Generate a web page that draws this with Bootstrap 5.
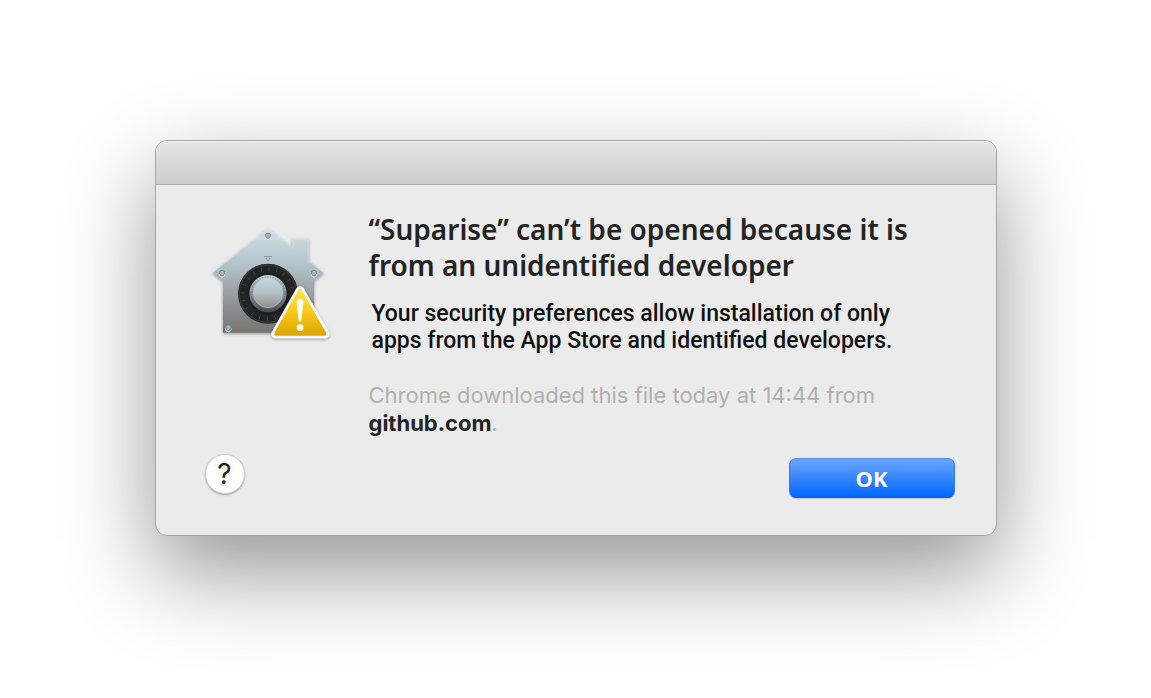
<!DOCTYPE html>
<html lang="en">
<head>
<meta charset="utf-8">
<meta name="viewport" content="width=device-width, initial-scale=1">
<title>Unidentified developer</title>
<link href="https://cdn.jsdelivr.net/npm/bootstrap@5.3.0/dist/css/bootstrap.min.css" rel="stylesheet">
<style>
  body { background: #fff; font-family: Inter, "Liberation Sans", sans-serif; color: #232323; }
  .alert-window {
    max-width: 842px;
    background: #ebebeb;
    border: 1px solid #a6a6a6;
    border-radius: 12px;
    box-shadow: 0 36px 90px rgba(0, 0, 0, .42);
  }
  .stage { padding-top: 140px; padding-bottom: 120px; }
  .title-strip {
    height: 44px;
    background: linear-gradient(#e6e6e6, #cdcdcd);
    border-bottom: 1px solid #a9a9a9;
    border-radius: 11px 11px 0 0;
    box-shadow: inset 0 1px 0 #f3f3f3;
  }
  .alert-content { padding: 26px 41px 37px 49px; }
  .icon-col { width: 164px; }
  .house { width: 140px; height: 135px; margin: 4px 0 0 -5px; }
  .headline { font-family: "Noto Sans", "Open Sans", sans-serif; font-weight: 600; font-size: 28px; line-height: 36px; }
  .reason { font-family: Roboto, sans-serif; font-size: 23px; line-height: 27px; font-weight: 500; color: #111; padding: 1px 0 3px 3px; }
  .origin { font-size: 22px; line-height: 28px; color: #b0b0b0; }
  .origin a { color: #232323; font-weight: 700; text-decoration: none; }
  .alert-actions { margin-top: 17px; }
  .help-btn {
    width: 40px; height: 40px; background: #fff; border: 1px solid #cfcfcf;
    font-size: 28px; line-height: 38px; font-weight: 400; color: #232323;
    box-shadow: 0 1px 2px rgba(0, 0, 0, .3);
  }
  .ok-btn {
    width: 166px; height: 40px; border: 1px solid; border-color: #4a90fa #2b7cf7 #0a62f0; border-radius: 7px;
    background: linear-gradient(#6ca6ff, #0066ff); color: #fff;
    font-family: "Noto Sans", sans-serif; font-weight: 700; font-size: 22px; line-height: 38px;
    box-shadow: 0 1px 1px rgba(0, 0, 0, .15);
  }
</style>
</head>
<body>
<main class="stage container-fluid min-vh-100 d-flex justify-content-center align-items-start">
  <section class="alert-window w-100" role="alertdialog" aria-labelledby="headline" aria-describedby="reason">
    <div class="title-strip"></div>
    <div class="alert-content">
      <div class="d-flex">
        <div class="icon-col flex-shrink-0">
          <svg class="house d-block" viewBox="0 0 420 405" role="img" aria-label="Security warning">
            <defs>
              <linearGradient id="wall" x1="0" y1="0" x2="0" y2="1"><stop offset="0" stop-color="#cfe0e7"/><stop offset=".35" stop-color="#b3c3ca"/><stop offset=".7" stop-color="#929698"/><stop offset="1" stop-color="#757372"/></linearGradient>
              <linearGradient id="ring" x1="0" y1="0" x2="0" y2="1"><stop offset="0" stop-color="#c4d1d6"/><stop offset=".45" stop-color="#8d979c"/><stop offset="1" stop-color="#4b4b4b"/></linearGradient>
              <linearGradient id="knob" x1="0" y1="0" x2="0" y2="1"><stop offset="0" stop-color="#c2dae3"/><stop offset=".5" stop-color="#b3bec3"/><stop offset="1" stop-color="#8d8d8d"/></linearGradient>
              <linearGradient id="gold" x1="0" y1="0" x2="0" y2="1"><stop offset="0" stop-color="#ffe14a"/><stop offset=".5" stop-color="#f6c91c"/><stop offset="1" stop-color="#dfa704"/></linearGradient>
              <filter id="drop" x="-20%" y="-20%" width="140%" height="150%"><feDropShadow dx="0" dy="3" stdDeviation="4" flood-opacity=".4"/></filter>
            </defs>
            <path filter="url(#drop)" fill="url(#wall)" d="M204 40 277 97V71H326V137L371 173 342 199V353H69V199L38 173Z"/>
            <path fill="none" stroke="#e3eef2" stroke-width="2" opacity=".5" d="M40 172 204 42 279 100V73H324V138L369 172"/>
            <g fill="#a9b4b8" stroke="#7b888d" stroke-width="3">
              <circle cx="204" cy="62" r="8"/><circle cx="66" cy="174" r="8"/><circle cx="342" cy="174" r="8"/><circle cx="85" cy="338" r="8"/>
            </g>
            <g fill="none" stroke="#e5f0f4" stroke-width="3">
              <path d="M195 65a9 9 0 0 0 18 0M57 177a9 9 0 0 0 18 0M333 177a9 9 0 0 0 18 0M76 341a9 9 0 0 0 18 0"/>
            </g>
            <path d="M192 125H216M198 129 204 138 210 129" fill="none" stroke="#76868c" stroke-width="3" opacity=".8"/>
            <circle cx="204" cy="236" r="90" fill="#232425"/>
            <circle cx="204" cy="236" r="86" fill="none" stroke="#34373a" stroke-width="4"/>
            <circle cx="204" cy="236" r="75" fill="none" stroke="#6e7173" stroke-width="12" stroke-dasharray="2 21.560" opacity=".6"/>
            <circle cx="204" cy="236" r="62" fill="#1c1d1e"/>
            <circle cx="204" cy="236" r="56" fill="url(#ring)"/>
            <circle cx="204" cy="236" r="50" fill="none" stroke="#555" stroke-width="8" stroke-dasharray="3 5" opacity=".25"/>
            <circle cx="204" cy="234" r="44" fill="url(#knob)" stroke="#c2d0d5" stroke-width="2"/>
            <path filter="url(#drop)" d="M300 226 226 357H376Z" fill="#f8f8f6" stroke="#f8f8f6" stroke-width="25" stroke-linejoin="round"/>
            <path d="M300 228 229 356H373Z" fill="url(#gold)" stroke="url(#gold)" stroke-width="12" stroke-linejoin="round"/>
            <path d="M300 252c7 0 11 5 10 13l-6 50c-1 6-7 6-8 0l-6-50c-1-8 3-13 10-13Z" fill="#fffdf0"/>
            <circle cx="300" cy="338" r="10" fill="#fffdf0"/>
          </svg>
        </div>
        <div class="flex-grow-1">
          <h1 class="headline mb-3 text-nowrap" id="headline">“Suparise” can’t be opened because it is<br>from an unidentified developer</h1>
          <p class="reason mb-4 text-nowrap" id="reason">Your security preferences allow installation of only<br>apps from the App Store and identified developers.</p>
          <p class="origin mb-0 text-nowrap">Chrome downloaded this file today at 14:44 from<br><a href="https://github.com">github.com</a>.</p>
        </div>
      </div>
      <div class="alert-actions d-flex justify-content-between align-items-start">
        <button type="button" class="help-btn rounded-circle p-0" aria-label="Help">?</button>
        <button type="button" class="ok-btn p-0 mt-1">OK</button>
      </div>
    </div>
  </section>
</main>
<script src="https://cdn.jsdelivr.net/npm/bootstrap@5.3.0/dist/js/bootstrap.bundle.min.js"></script>
</body>
</html>
